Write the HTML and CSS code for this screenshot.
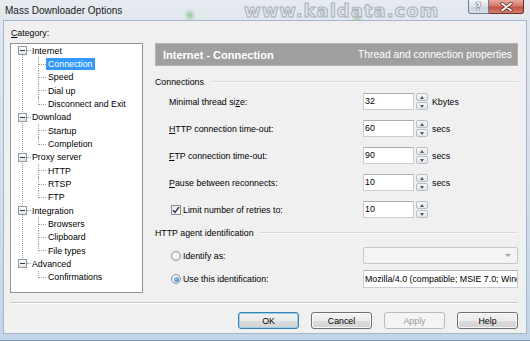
FILE: index.html
```html
<!DOCTYPE html>
<html>
<head>
<meta charset="utf-8">
<link rel="stylesheet" href="styles.css">
</head>
<body>
<div class="window">
  <div class="titlebar">
    <span class="title">Mass Downloader Options</span>
    <div class="caption-btns">
      <span class="cb cb-help">?</span>
      <span class="cb cb-close"><svg width="13" height="10" viewBox="0 0 13 10"><path d="M2 1.5 L11 8.5 M11 1.5 L2 8.5" stroke="#5a1f1f" stroke-width="3.2" stroke-linecap="round"/><path d="M2 1.5 L11 8.5 M11 1.5 L2 8.5" stroke="#fff" stroke-width="1.8" stroke-linecap="round"/></svg></span>
    </div>
    <span class="watermark">www.kaldata.com</span>
  </div>
  <div class="client">
    <div class="main">
      <div class="left">
        <div class="cat-label"><u>C</u>ategory:</div>
        <div class="tree">
          <div class="root"><div class="root-row"><span class="box"><i></i></span><span class="hline"></span><span class="txt">Internet</span></div>
            <ul class="children">
              <li><span class="txt sel">Connection</span></li>
              <li><span class="txt">Speed</span></li>
              <li><span class="txt">Dial up</span></li>
              <li><span class="txt">Disconnect and Exit</span></li>
            </ul>
          </div>
          <div class="root"><div class="root-row"><span class="box"><i></i></span><span class="hline"></span><span class="txt">Download</span></div>
            <ul class="children">
              <li><span class="txt">Startup</span></li>
              <li><span class="txt">Completion</span></li>
            </ul>
          </div>
          <div class="root"><div class="root-row"><span class="box"><i></i></span><span class="hline"></span><span class="txt">Proxy server</span></div>
            <ul class="children">
              <li><span class="txt">HTTP</span></li>
              <li><span class="txt">RTSP</span></li>
              <li><span class="txt">FTP</span></li>
            </ul>
          </div>
          <div class="root"><div class="root-row"><span class="box"><i></i></span><span class="hline"></span><span class="txt">Integration</span></div>
            <ul class="children">
              <li><span class="txt">Browsers</span></li>
              <li><span class="txt">Clipboard</span></li>
              <li><span class="txt">File types</span></li>
            </ul>
          </div>
          <div class="root"><div class="root-row"><span class="box"><i></i></span><span class="hline"></span><span class="txt">Advanced</span></div>
            <ul class="children">
              <li><span class="txt">Confirmations</span></li>
            </ul>
          </div>
        </div>
      </div>
      <div class="right">
        <div class="page-header"><span class="ph-title">Internet - Connection</span><span class="ph-sub">Thread and connection properties</span></div>
        <div class="group-label"><span>Connections</span><div class="gline"></div></div>
        <div class="rows">
          <div class="row"><span class="lbl">Minimal thread si<u>z</u>e:</span><div class="edit">32</div><div class="updown"><span class="up"></span><span class="down"></span></div><span class="unit">Kbytes</span></div>
          <div class="row"><span class="lbl"><u>H</u>TTP connection time-out:</span><div class="edit">60</div><div class="updown"><span class="up"></span><span class="down"></span></div><span class="unit">secs</span></div>
          <div class="row"><span class="lbl"><u>F</u>TP connection time-out:</span><div class="edit">90</div><div class="updown"><span class="up"></span><span class="down"></span></div><span class="unit">secs</span></div>
          <div class="row"><span class="lbl"><u>P</u>ause between reconnects:</span><div class="edit">10</div><div class="updown"><span class="up"></span><span class="down"></span></div><span class="unit">secs</span></div>
          <div class="row"><span class="lbl lbl-check"><span class="check"><svg width="8" height="8" viewBox="0 0 8 8"><path d="M1 4.2 L3 6.4 L7 1" fill="none" stroke="#2b3f63" stroke-width="1.5"/></svg></span>Limit number of retries to:</span><div class="edit">10</div><div class="updown"><span class="up"></span><span class="down"></span></div></div>
        </div>
        <div class="group-label group2"><span>HTTP agent identification</span><div class="gline"></div></div>
        <div class="agent">
          <div class="arow"><span class="lbl lbl-radio"><span class="radio"></span>Identify as:</span><div class="combo"><span class="carrow"></span></div></div>
          <div class="arow"><span class="lbl lbl-radio"><span class="radio on"><i></i></span>Use this identification:</span><div class="edit wide">Mozilla/4.0 (compatible; MSIE 7.0; Windows NT 6.0)</div></div>
        </div>
      </div>
    </div>
    <div class="sep"></div>
    <div class="buttons">
      <span class="btn btn-default">OK</span>
      <span class="btn">Cancel</span>
      <span class="btn btn-disabled">Apply</span>
      <span class="btn">Help</span>
    </div>
  </div>
</div>
</body>
</html>
```

FILE: styles.css
```css
html, body {
  margin: 0;
  padding: 0;
}
body {
  width: 530px;
  height: 341px;
  overflow: hidden;
  font-family: "Liberation Sans", Arial, sans-serif;
  font-size: 8.8px;
  color: #000;
  background: #c9d8e8;
}
.window {
  width: 530px;
  height: 341px;
  box-sizing: border-box;
  background:
    radial-gradient(circle at 190px 15px, rgba(90,170,90,0.55) 0, rgba(90,170,90,0) 6px),
    radial-gradient(circle at 357px 18px, rgba(120,170,80,0.45) 0, rgba(120,170,80,0) 6px),
    linear-gradient(to bottom, #e6ebf0 0%, #dfe6ed 8%, #d3dde8 60%, #c2d4e6 100%);
  border-bottom: 1px solid #7d98b5;
  display: flex;
  flex-direction: column;
}
.titlebar {
  height: 20px;
  position: relative;
  display: flex;
  justify-content: space-between;
  align-items: flex-start;
}
.title {
  font-size: 10px;
  line-height: 22px;
  padding-left: 5px;
  color: #1a1a1a;
}
.caption-btns {
  display: flex;
  margin-right: 6px;
  position: relative;
  z-index: 2;
}
.cb {
  height: 14px;
  box-sizing: border-box;
  display: flex;
  align-items: center;
  justify-content: center;
  border: 1px solid #6d7f94;
  border-top: none;
}
.cb-help {
  width: 21px;
  border-radius: 0 0 0 3px;
  background: linear-gradient(to bottom, #f3f5f8 0%, #dde3ea 50%, #c9d2dc 51%, #d7dfe8 100%);
  font-family: "DejaVu Sans", sans-serif;
  font-size: 10px;
  font-weight: bold;
  color: #fff;
  text-shadow: 0 0 1px #3c4b5c, 0 0 1px #3c4b5c, 0 0 1px #3c4b5c;
}
.cb-close {
  width: 35px;
  border-left: none;
  border-color: #7a2b2b;
  border-radius: 0 0 3px 0;
  background: linear-gradient(to bottom, #e8a89c 0%, #d47a6c 45%, #c3503f 55%, #d4806e 100%);
}
.watermark {
  position: absolute;
  left: 244px;
  top: 1px;
  font-family: "DejaVu Sans", sans-serif;
  font-weight: bold;
  font-size: 18px;
  line-height: 20px;
  letter-spacing: 1px;
  color: #dfe4e9;
  -webkit-text-stroke: 1px #a3acb5;
  opacity: 0.9;
}
.client {
  margin: 0 3px;
  height: 314px;
  box-sizing: border-box;
  border: 1px solid #a5b6c8;
  background: #f0f0f0;
  display: flex;
  flex-direction: column;
}
.main {
  display: grid;
  grid-template-columns: 133px 363px;
  column-gap: 12px;
  padding-left: 6px;
}
.left {
  padding-top: 6px;
}
.cat-label {
  line-height: 12px;
  height: 12px;
  margin-bottom: 4px;
  padding-left: 1px;
}
u {
  text-decoration: underline;
}
.tree {
  height: 250px;
  box-sizing: border-box;
  border: 1px solid #8e939a;
  background: #fff;
  position: relative;
}
.tree::before {
  content: "";
  position: absolute;
  left: 11px;
  top: 7px;
  height: 213px;
  border-left: 1px dotted #a0a0a0;
}
.root-row {
  height: 13.33px;
  display: flex;
  align-items: center;
  padding-left: 7px;
}
.box {
  position: relative;
  width: 9px;
  height: 9px;
  box-sizing: border-box;
  border: 1px solid #8f9aa6;
  background: linear-gradient(to bottom, #ffffff, #e1e4e8);
  display: flex;
  align-items: center;
  justify-content: center;
}
.box i {
  display: block;
  width: 5px;
  height: 1px;
  background: #2d3a4a;
}
.hline {
  width: 4px;
  border-top: 1px dotted #a0a0a0;
}
.txt {
  line-height: 12px;
  padding: 0 2px;
  white-space: nowrap;
}
.root-row .txt {
  padding-left: 1px;
}
.children {
  list-style: none;
  margin: 0;
  padding: 0;
}
.children li {
  position: relative;
  height: 13.33px;
  display: flex;
  align-items: center;
  padding-left: 35px;
}
.children li::before {
  content: "";
  position: absolute;
  left: 27px;
  top: 0;
  width: 7px;
  height: 6.5px;
  border-left: 1px dotted #a0a0a0;
  border-bottom: 1px dotted #a0a0a0;
}
.children li:not(:last-child)::after {
  content: "";
  position: absolute;
  left: 27px;
  top: 6.5px;
  bottom: 0;
  border-left: 1px dotted #a0a0a0;
}
.sel {
  background: #3399ff;
  color: #fff;
}
.right {
  padding-top: 22px;
}
.page-header {
  height: 23px;
  box-sizing: border-box;
  background: #9f9f9f;
  border: 1px solid #b2b2b2;
  display: flex;
  align-items: center;
  justify-content: space-between;
  padding: 0 5px 0 7px;
  color: #fff;
}
.ph-title {
  font-weight: bold;
  font-size: 11px;
}
.ph-sub {
  font-size: 10.3px;
}
.group-label {
  display: flex;
  align-items: center;
  height: 12px;
  margin-top: 10px;
}
.group-label span {
  white-space: nowrap;
}
.gline {
  flex: 1;
  margin-left: 8px;
  border-top: 1px solid #d5d9dd;
  border-bottom: 1px solid #fbfbfb;
}
.group2 {
  margin-top: 9px;
}
.group2 .gline {
  margin-left: 7px;
}
.rows {
  margin-top: 5px;
  display: flex;
  flex-direction: column;
  gap: 10px;
}
.row, .arow {
  display: flex;
  align-items: center;
  height: 17px;
}
.lbl {
  box-sizing: border-box;
  width: 208px;
  padding-left: 14px;
  flex: none;
  display: flex;
  align-items: center;
  white-space: nowrap;
}
.edit {
  width: 51px;
  height: 17px;
  box-sizing: border-box;
  background: #fff;
  border: 1px solid #c9ced5;
  border-top-color: #abadb3;
  padding-left: 1px;
  line-height: 15px;
  flex: none;
  overflow: hidden;
  white-space: nowrap;
}
.updown {
  margin-left: 2px;
  width: 12px;
  height: 17px;
  display: flex;
  flex-direction: column;
  gap: 1px;
  flex: none;
}
.updown span {
  flex: 1;
  box-sizing: border-box;
  border: 1px solid #b9bec4;
  border-radius: 2px;
  background: linear-gradient(to bottom, #f7f7f7, #e2e5e8);
  display: flex;
  align-items: center;
  justify-content: center;
}
.updown .up::after {
  content: "";
  border-left: 2.5px solid transparent;
  border-right: 2.5px solid transparent;
  border-bottom: 3px solid #4c5a6e;
}
.updown .down::after {
  content: "";
  border-left: 2.5px solid transparent;
  border-right: 2.5px solid transparent;
  border-top: 3px solid #4c5a6e;
}
.unit {
  margin-left: 4px;
}
.lbl-check, .lbl-radio {
  padding-left: 16px;
}
.check {
  width: 10px;
  height: 10px;
  box-sizing: border-box;
  border: 1px solid #8e8f8f;
  background: linear-gradient(to bottom right, #e5e8ec, #fafbfc);
  display: flex;
  align-items: center;
  justify-content: center;
  margin-right: 2px;
}
.agent {
  margin-top: 8px;
  display: flex;
  flex-direction: column;
  gap: 6px;
}
.arow:last-child {
  height: 18px;
}
.radio {
  width: 10px;
  height: 10px;
  box-sizing: border-box;
  border-radius: 50%;
  border: 1px solid #8e9299;
  background: radial-gradient(circle at 40% 40%, #ffffff, #d9dde2);
  margin-right: 2px;
  display: flex;
  align-items: center;
  justify-content: center;
}
.radio i {
  display: block;
  width: 5px;
  height: 5px;
  border-radius: 50%;
  background: radial-gradient(circle at 35% 35%, #9fd3ff, #1c5fb5);
}
.combo {
  width: 155px;
  height: 17px;
  box-sizing: border-box;
  border: 1px solid #c4c7cb;
  border-radius: 2px;
  background: #f4f4f4;
  display: flex;
  align-items: center;
  justify-content: flex-end;
  padding-right: 6px;
}
.carrow {
  border-left: 3px solid transparent;
  border-right: 3px solid transparent;
  border-top: 3px solid #a6a6a6;
}
.edit.wide {
  width: 155px;
  height: 18px;
  line-height: 16px;
}
.sep {
  margin: 9px 8px 0 6px;
  border-top: 1px solid #c4c6c8;
  border-bottom: 1px solid #fdfdfd;
}
.buttons {
  margin-top: 8px;
  display: flex;
  justify-content: flex-end;
  gap: 12px;
  padding-right: 8px;
}
.btn {
  width: 61px;
  height: 17px;
  box-sizing: border-box;
  border: 1px solid #707070;
  border-radius: 3px;
  background: linear-gradient(to bottom, #f3f3f3 0%, #ebebeb 50%, #dddddd 51%, #d2d2d2 100%);
  box-shadow: inset 0 0 0 1px rgba(255,255,255,0.8);
  display: flex;
  align-items: center;
  justify-content: center;
}
.btn-default {
  border-color: #3c7fb1;
  box-shadow: inset 0 0 0 1px #9ad0ee;
}
.btn-disabled {
  border-color: #b8bcbf;
  background: #f4f4f4;
  color: #9a9a9a;
  box-shadow: none;
}
```
